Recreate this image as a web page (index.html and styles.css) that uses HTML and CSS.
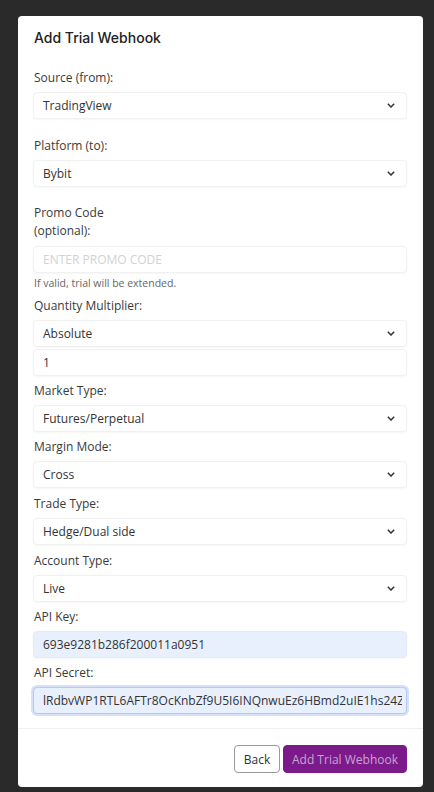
FILE: index.html
```html
<!DOCTYPE html>
<html>
<head>
<meta charset="utf-8">
<link rel="stylesheet" href="styles.css">
</head>
<body>
<div class="modal">
  <div class="header"><h1 class="title">Add Trial Webhook</h1></div>
  <div class="body">
    <div class="group g-source">
      <label class="label">Source (from):</label>
      <div class="select"><span>TradingView</span><svg class="chev" viewBox="0 0 8 5" width="8" height="5"><path d="M0.8 0.8l3.2 3.2 3.2-3.2" fill="none" stroke="#333" stroke-width="1.5"/></svg></div>
    </div>
    <div class="group g-platform">
      <label class="label">Platform (to):</label>
      <div class="select"><span>Bybit</span><svg class="chev" viewBox="0 0 8 5" width="8" height="5"><path d="M0.8 0.8l3.2 3.2 3.2-3.2" fill="none" stroke="#333" stroke-width="1.5"/></svg></div>
    </div>
    <div class="group g-promo">
      <label class="label label-narrow">Promo Code (optional):</label>
      <input class="input" type="text" placeholder="ENTER PROMO CODE">
      <div class="help">If valid, trial will be extended.</div>
    </div>
    <div class="group g-qty">
      <label class="label">Quantity Multiplier:</label>
      <div class="select"><span>Absolute</span><svg class="chev" viewBox="0 0 8 5" width="8" height="5"><path d="M0.8 0.8l3.2 3.2 3.2-3.2" fill="none" stroke="#333" stroke-width="1.5"/></svg></div>
      <input class="input input-after" type="text" value="1">
    </div>
    <div class="group g-std">
      <label class="label">Market Type:</label>
      <div class="select"><span>Futures/Perpetual</span><svg class="chev" viewBox="0 0 8 5" width="8" height="5"><path d="M0.8 0.8l3.2 3.2 3.2-3.2" fill="none" stroke="#333" stroke-width="1.5"/></svg></div>
    </div>
    <div class="group g-std">
      <label class="label">Margin Mode:</label>
      <div class="select"><span>Cross</span><svg class="chev" viewBox="0 0 8 5" width="8" height="5"><path d="M0.8 0.8l3.2 3.2 3.2-3.2" fill="none" stroke="#333" stroke-width="1.5"/></svg></div>
    </div>
    <div class="group g-wide">
      <label class="label">Trade Type:</label>
      <div class="select"><span>Hedge/Dual side</span><svg class="chev" viewBox="0 0 8 5" width="8" height="5"><path d="M0.8 0.8l3.2 3.2 3.2-3.2" fill="none" stroke="#333" stroke-width="1.5"/></svg></div>
    </div>
    <div class="group g-wide">
      <label class="label">Account Type:</label>
      <div class="select"><span>Live</span><svg class="chev" viewBox="0 0 8 5" width="8" height="5"><path d="M0.8 0.8l3.2 3.2 3.2-3.2" fill="none" stroke="#333" stroke-width="1.5"/></svg></div>
    </div>
    <div class="group g-std">
      <label class="label">API Key:</label>
      <input class="input input-auto" type="text" value="693e9281b286f200011a0951">
    </div>
    <div class="group g-std">
      <label class="label">API Secret:</label>
      <input class="input input-auto input-focus" type="text" value="lRdbvWP1RTL6AFTr8OcKnbZf9U5I6INQnwuEz6HBmd2uIE1hs24Zk">
    </div>
  </div>
  <div class="footer">
    <button class="btn btn-back">Back</button>
    <button class="btn btn-add">Add Trial Webhook</button>
  </div>
</div>
</body>
</html>
```

FILE: styles.css
```css
html, body {
  margin: 0;
  padding: 0;
  background: #2a2a2a;
}
body {
  width: 434px;
  height: 792px;
  overflow: hidden;
  font-family: "Open Sans", "Liberation Sans", sans-serif;
  color: #333;
  padding-top: 16px;
  box-sizing: border-box;
}
.modal {
  margin-left: 18px;
  width: 405px;
  background: #fff;
  border-radius: 4px;
  box-sizing: border-box;
}
.header {
  padding: 11px 16px 0 16px;
}
.title {
  margin: 0;
  font-family: "Inter", "DejaVu Sans", sans-serif;
  font-weight: 450;
  font-size: 14px;
  line-height: 22px;
  color: #222;
}
.body {
  padding: 20px 16px 14px 15px;
  display: flex;
  flex-direction: column;
}
.group {
  display: flex;
  flex-direction: column;
}
.g-platform { margin-top: 18px; }
.g-promo { margin-top: 17px; }
.g-qty { margin-top: 6px; }
.g-std { margin-top: 6px; }
.g-wide { margin-top: 7px; }
.label {
  display: block;
  font-size: 12px;
  line-height: 18px;
  color: #3a3a3a;
  margin-bottom: 5px;
  padding-left: 1px;
}
.label-narrow {
  width: 80px;
  margin-bottom: 6px;
}
.select, .input {
  box-sizing: border-box;
  height: 27px;
  width: 100%;
  border: 1px solid #f1f1f1;
  border-radius: 4px;
  box-shadow: 0 1px 2px rgba(0,0,0,0.04);
  background: #fff;
  font-family: "Open Sans", "Liberation Sans", sans-serif;
  font-size: 12px;
  color: #333;
}
.select {
  display: flex;
  align-items: center;
  justify-content: space-between;
  padding: 0 11px 0 9px;
}
.chev {
  display: block;
}
.input {
  padding: 0 9px;
  outline: none;
  margin: 0;
}
.input::placeholder {
  color: #d2d2d2;
}
.input-after {
  margin-top: 2px;
}
.input-auto {
  background: #e8f0fe;
  border-color: #e3eafa;
}
.input-focus {
  border-color: #b7c8f3;
  box-shadow: 0 0 0 2px #d6e0fa;
  padding-right: 4px;
}
.help {
  margin-top: 2px;
  font-size: 10.5px;
  line-height: 16px;
  color: #666;
  padding-left: 1px;
}
.footer {
  border-top: 1px solid #f0f0f0;
  padding: 16px 16px 14px 16px;
  display: flex;
  justify-content: flex-end;
  gap: 3px;
}
.btn {
  height: 28px;
  border-radius: 4px;
  font-family: "Open Sans", "Liberation Sans", sans-serif;
  font-size: 12px;
  cursor: pointer;
  padding: 0;
}
.btn-back {
  background: #fff;
  border: 1px solid #9a9a9a;
  color: #333;
  width: 46px;
}
.btn-add {
  background: #7c1a8c;
  border: 1px solid #7c1a8c;
  color: #c9a3d2;
  width: 124px;
}
```
